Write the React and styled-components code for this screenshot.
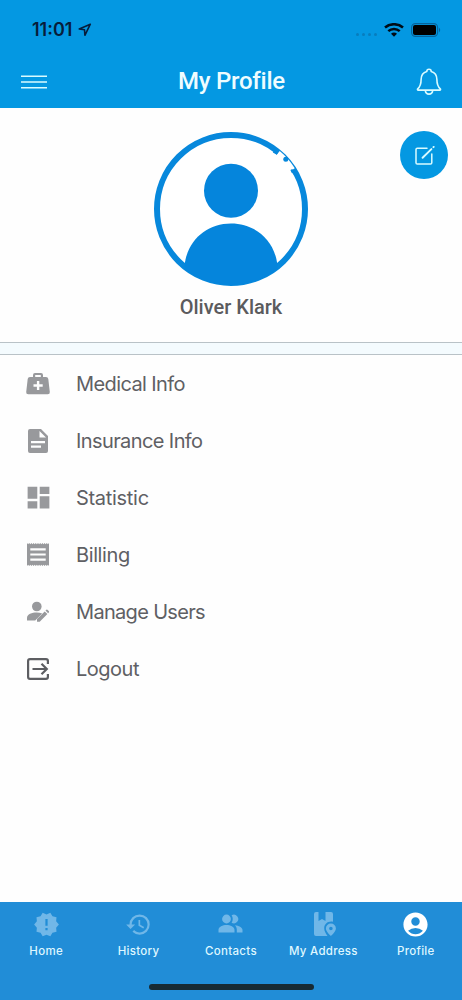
import styled, { createGlobalStyle } from "styled-components";
import {
	MdAccountCircle,
	MdDashboard,
	MdHistory,
	MdNewReleases,
} from "react-icons/md";

const MenuIcon = () => (
	<svg width="26" height="14" viewBox="0 0 26 14" stroke="#d9fbff" strokeWidth="1.5">
		<path d="M0 1.300h26M0 7h26M0 12.700h26" />
	</svg>
);

const BellIcon = () => (
	<svg width="26" height="28" viewBox="0 0 26 28" fill="none" stroke="#d9fbff" strokeWidth="1.6" strokeLinejoin="round">
		<path d="M10.8 3.4a2.2 2.2 0 0 1 4.4 0c3.8 1 5.7 4.1 5.7 8.2 0 5.6 1.2 7.4 3.4 9.3.5.5.2 1.2-.5 1.2H2.2c-.7 0-1-.7-.5-1.2 2.2-1.9 3.4-3.7 3.4-9.3 0-4.1 1.9-7.2 5.7-8.2z" />
		<path d="M9.3 22.4c.2 2.3 1.6 3.7 3.7 3.7s3.5-1.4 3.7-3.7" />
	</svg>
);

const LocationIcon = () => (
	<svg width="14" height="14" viewBox="0 0 14 14" fill="none" stroke="#071d3b" strokeWidth="1.6" strokeLinejoin="round">
		<path d="M12.300 1.200L1.200 6l5.300.7.400 5.600z" />
	</svg>
);

const WifiIcon = () => (
	<svg width="20" height="14" viewBox="0 0 20 14" fill="none" stroke="#000c16" strokeWidth="2.5">
		<path d="M1 4.500c5-4.4 13-4.4 18 0M4.3 8.100c3.2-2.900 8.2-2.900 11.4 0" />
		<path d="M7 10.7c1.7-1.5 4.3-1.5 6 0l-3 3z" fill="#000c16" stroke="none" />
	</svg>
);

const BatteryIcon = () => (
	<svg width="30" height="14" viewBox="0 0 30 14">
		<rect x=".6" y=".6" width="26" height="12.8" rx="3.8" fill="none" stroke="#07649c" strokeWidth="1.1" />
		<rect x="2" y="2" width="23" height="10" rx="2" fill="#000" />
		<path d="M28 4.8c1.6.7 1.6 3.7 0 4.4z" fill="#07649c" />
	</svg>
);

const EditIcon = () => (
	<svg width="20" height="20" viewBox="0 0 20 20" fill="none" stroke="#d9fbff" strokeWidth="1.5" strokeLinecap="round" strokeLinejoin="round">
		<path d="M12 2.2H2.3Q1 2.2 1 3.5v13.2Q1 18 2.3 18h13.2q1.3 0 1.3-1.3V8" />
		<path d="M7.6 11.8l8.8-8.7M18.4 1.2l.3-.3" strokeWidth="1.9" />
	</svg>
);

const Avatar = () => (
	<svg width="154" height="154" viewBox="0 0 154 154">
		<defs>
			<clipPath id="avatar">
				<circle cx="77" cy="77" r="76" />
			</clipPath>
		</defs>
		<circle cx="77" cy="77" r="74" fill="#fff" stroke="#0788dc" strokeWidth="6" />
		<circle cx="77" cy="58.7" r="27" fill="#0585dc" />
		<path d="M30.5 134C33 108 53 91.5 77 91.5s44 16.500 46.500 42.500V154h-93z" fill="#0585dc" clipPath="url(#avatar)" />
		<path d="M124 21.100A73 73 0 0 1 138.500 37.700" fill="none" stroke="#fff" strokeWidth="5.400" />
		<circle cx="131.800" cy="27.300" r="2.500" fill="#0788dc" />
		<path d="M120.500 18.500l3.300 2.600-1 1.600-4-2.200zM138.300 37l1.800 3-2.300 1-1.400-3z" fill="#0788dc" />
	</svg>
);

const MedicalIcon = () => (
	<svg width="24" height="24" viewBox="0 0 24 24">
		<path fillRule="evenodd" d="M7 5V3q0-2 2-2h6q2 0 2 2v2h3q2 0 2.300 2l1.500 13q.2 2.200-2 2.200H2.200Q0 22.200.2 20L1.700 7Q2 5 4 5zm2.200 0h5.600V3H9.200zm1.700 4v3.300H7.500V14.700h3.400V18h2.400v-3.300h3.400v-2.400h-3.400V9z" />
	</svg>
);

const DocumentIcon = () => (
	<svg width="20" height="24" viewBox="0 0 20 24">
		<path fillRule="evenodd" d="M2 0h11l7 7v15q0 2-2 2H2q-2 0-2-2V2q0-2 2-2zm9.500 2V8.500H18zM3 12v2.200h14V12zm0 4.500v2.200h10v-2.200z" />
	</svg>
);

const ReceiptIcon = () => (
	<svg width="22" height="23" viewBox="0 0 22 23">
		<path
			fillRule="evenodd"
			d="M0 0l1.100 1.300L2.200 0l1.100 1.300L4.400 0l1.100 1.300L6.600 0l1.100 1.300L8.800 0l1.100 1.300L11 0l1.100 1.300L13.200 0l1.100 1.300L15.400 0l1.100 1.300L17.600 0l1.100 1.300L19.800 0l1.100 1.300L22 0v23l-1.100-1.300L19.800 23l-1.100-1.300L17.600 23l-1.100-1.300L15.400 23l-1.100-1.300L13.200 23l-1.100-1.300L11 23l-1.100-1.300L8.800 23l-1.100-1.300L6.600 23l-1.100-1.300L4.400 23l-1.100-1.300L2.200 23l-1.100-1.300L0 23zM3.300 5.300v2.200h15.400V5.300zm0 5.100v2.200h15.400v-2.200zm0 5.100v2.200h15.400v-2.200z"
		/>
	</svg>
);

const ManageIcon = () => (
	<svg width="22" height="22" viewBox="0 0 22 22">
		<circle cx="9.800" cy="5.500" r="4.800" />
		<path d="M0 19.500v-2.700c0-3.600 5-5.300 9.600-5.300 2.100 0 4 .3 5.600.9L8.200 19.500z" />
		<path d="M10 20.700V18l7.700-7.600 2.700 2.700-7.700 7.600zM18.500 9.600l.9-.9q.5-.5 1 0l1.600 1.600q.5.500 0 1l-.9.900z" />
	</svg>
);

const LogoutIcon = () => (
	<svg width="22" height="22" viewBox="0 0 22 22" fill="none" stroke="#5d5e62" strokeWidth="2.200">
		<path d="M20.900 6V3q0-1.900-1.900-1.900H3Q1.100 1.100 1.100 3v16q0 1.900 1.900 1.900h16q1.900 0 1.900-1.900v-3" />
		<path d="M5.500 11h14M14.500 5.700l5.300 5.300-5.300 5.300" />
	</svg>
);

const ContactsIcon = () => (
	<svg width="25" height="20" viewBox="0 0 25 20">
		<circle cx="8.500" cy="5" r="4.400" />
		<path d="M13.600 1.200a4.400 4.400 0 1 1 0 7.600c1.500-2.300 1.500-5.300 0-7.600z" />
		<path d="M.5 18.500v-2.700c0-3 4.300-4.700 8-4.700s8 1.700 8 4.700v2.700zM17 11.300c3.700.5 7.500 2 7.500 4.700v2.500h-5.700v-2.700c0-1.900-.7-3.400-1.800-4.500z" />
	</svg>
);

const AddressIcon = () => (
	<svg width="25" height="24" viewBox="-3 0 25 24">
		<path d="M2 0h2.500v9L8 7l3.500 2V0H17q2 0 2 2v7.800c-4.900-1-8.800 2.100-8.800 6.500 0 2.600 1.400 5 3.300 7.700H2q-2 0-2-2V2q0-2 2-2z" />
		<path fillRule="evenodd" d="M16.900 11.500a5 5 0 0 1 5 5c0 3.200-5 7.500-5 7.500s-5-4.300-5-7.500a5 5 0 0 1 5-5zm0 3.200a1.800 1.800 0 1 0 0 3.600 1.800 1.800 0 0 0 0-3.600z" />
	</svg>
);

const menu = [
	{ label: "Medical Info", icon: <MedicalIcon />, tracking: -0.6 },
	{ label: "Insurance Info", icon: <DocumentIcon />, tracking: -0.6 },
	{ label: "Statistic", icon: <MdDashboard size={29} />, tracking: -0.3 },
	{ label: "Billing", icon: <ReceiptIcon />, tracking: -0.4 },
	{ label: "Manage Users", icon: <ManageIcon />, tracking: -0.68 },
	{ label: "Logout", icon: <LogoutIcon />, tracking: -0.5 },
];

const tabs = [
	{ label: "Home", icon: <MdNewReleases size={27} /> },
	{ label: "History", icon: <MdHistory size={27} /> },
	{ label: "Contacts", icon: <ContactsIcon /> },
	{ label: "My Address", icon: <AddressIcon /> },
	{ label: "Profile", icon: <MdAccountCircle size={29} />, active: true },
];

const App = () => (
	<Screen>
		<GlobalStyle />
		<Header>
			<StatusBar>
				<Time>
					11:01 <LocationIcon />
				</Time>
				<Signals>
					<CellDots>
						<i />
						<i />
						<i />
						<i />
					</CellDots>
					<WifiIcon />
					<BatteryIcon />
				</Signals>
			</StatusBar>
			<TitleBar>
				<MenuIcon />
				<Title>My Profile</Title>
				<BellIcon />
			</TitleBar>
		</Header>
		<ProfileCard>
			<Avatar />
			<Name>Oliver Klark</Name>
			<EditButton aria-label="Edit profile">
				<EditIcon />
			</EditButton>
		</ProfileCard>
		<Divider />
		<Menu>
			{menu.map((item) => (
				<MenuRow key={item.label}>
					<MenuGlyph>{item.icon}</MenuGlyph>
					<MenuLabel $tracking={item.tracking}>{item.label}</MenuLabel>
				</MenuRow>
			))}
		</Menu>
		<Footer>
			<Tabs>
				{tabs.map((tab) => (
					<Tab key={tab.label}>
						<TabGlyph $active={tab.active}>{tab.icon}</TabGlyph>
						<span>{tab.label}</span>
					</Tab>
				))}
			</Tabs>
			<HomeIndicator />
		</Footer>
	</Screen>
);

const GlobalStyle = createGlobalStyle`
	* {
		box-sizing: border-box;
	}

	body {
		margin: 0;
	}

	svg {
		display: block;
		flex-shrink: 0;
	}
`;

const Screen = styled.div`
	height: 1000px;
	display: flex;
	flex-direction: column;
	background: #fefefe;
	font-family: Inter, sans-serif;
`;

const Header = styled.header`
	height: 108px;
	background: #0498e2;
`;

const StatusBar = styled.div`
	height: 58px;
	padding: 2px 21px 0 32px;
	display: flex;
	align-items: center;
	justify-content: space-between;
`;

const Time = styled.div`
	display: flex;
	align-items: center;
	gap: 6px;
	color: #071d3b;
	font-size: 18px;
	font-weight: 600;
	line-height: 22px;
`;

const Signals = styled.div`
	display: flex;
	align-items: center;
	gap: 7px;
`;

const CellDots = styled.div`
	display: flex;
	gap: 3px;
	margin-top: 9px;

	i {
		width: 3px;
		height: 3px;
		border-radius: 50%;
		background: #087dbd;
	}
`;

const TitleBar = styled.div`
	height: 48px;
	padding: 0 20px 0 21px;
	display: flex;
	align-items: center;
	justify-content: space-between;
`;

const Title = styled.h1`
	margin: 0;
	color: #effdff;
	font: 500 24px/28px Roboto, sans-serif;
	letter-spacing: -0.25px;
	padding-bottom: 2px;
`;

const ProfileCard = styled.section`
	position: relative;
	height: 234px;
	padding-top: 23.5px;
	display: flex;
	flex-direction: column;
	align-items: center;
`;

const Name = styled.div`
	margin-top: 9px;
	color: #5b5b5d;
	font: 500 20px/24px Roboto, sans-serif;
`;

const EditButton = styled.button`
	position: absolute;
	top: 23px;
	right: 14px;
	width: 48px;
	height: 48px;
	padding: 1px 0 0 1px;
	display: flex;
	align-items: center;
	justify-content: center;
	border: 0;
	border-radius: 50%;
	background: #0498e2;
`;

const Divider = styled.div`
	height: 13px;
	border: solid #b9c2c7;
	border-width: 1px 0;
	background: #f4fbfe;
`;

const Menu = styled.nav`
	flex: 1;
`;

const MenuRow = styled.div`
	height: 57px;
	padding-left: 23px;
	display: flex;
	align-items: center;
	gap: 23px;
	color: #5f6064;
	font-size: 20px;
`;

const MenuLabel = styled.span`
	letter-spacing: ${(props) => props.$tracking}px;
`;

const MenuGlyph = styled.div`
	width: 30px;
	display: flex;
	justify-content: center;
	color: #98999c;
	fill: currentColor;
`;

const Footer = styled.footer`
	height: 98px;
	padding-bottom: 10px;
	display: flex;
	flex-direction: column;
	justify-content: space-between;
	align-items: center;
	background: #218dd7;
`;

const Tabs = styled.div`
	width: 100%;
	padding-top: 7px;
	display: grid;
	grid-template-columns: repeat(5, 1fr);
`;

const Tab = styled.div`
	display: flex;
	flex-direction: column;
	align-items: center;
	gap: 4px;
	color: #dff7ff;
	font-size: 11.5px;
	font-weight: 500;
	line-height: 16px;
	letter-spacing: 0.3px;
`;

const TabGlyph = styled.div`
	height: 30px;
	display: flex;
	align-items: center;
	color: ${(props) => (props.$active ? "#ffffff" : "#70b7e8")};
	fill: currentColor;
`;

const HomeIndicator = styled.div`
	width: 165px;
	height: 6px;
	border-radius: 3px;
	background: #172a33;
`;

export default App;
